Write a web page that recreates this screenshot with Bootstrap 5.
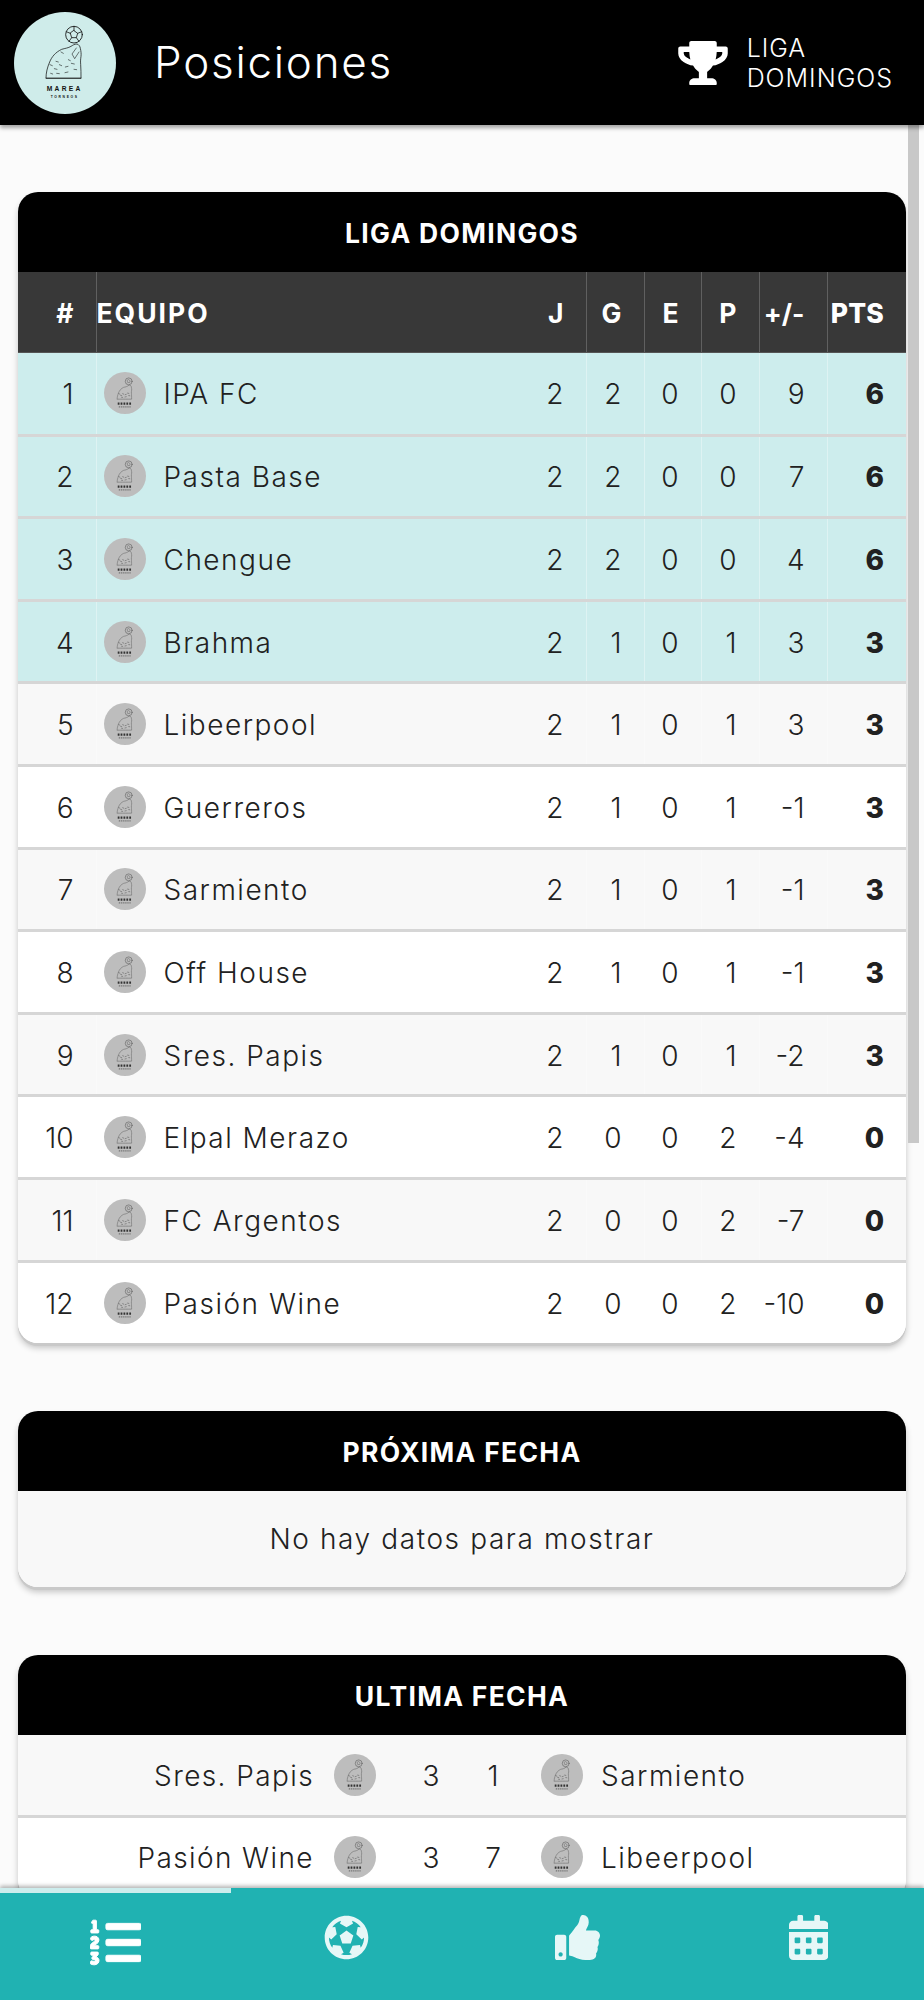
<!DOCTYPE html>
<html lang="es">
<head>
<meta charset="utf-8">
<title>Posiciones</title>
<link rel="stylesheet" href="https://cdn.jsdelivr.net/npm/bootstrap@5.3.0/dist/css/bootstrap.min.css">
<style>
html,body{height:2000px;overflow:hidden;}
body{font-family:Inter,"Open Sans","Liberation Sans",sans-serif;font-weight:300;color:#212121;background:#fbfbfb;}
.shell{height:2000px;}
.topbar{height:125px;background:#000;color:#fff;box-shadow:0 3px 4px rgba(0,0,0,.35);z-index:2;padding-left:14px;}
.crest{width:102px;height:102px;background:#cfecea;color:#111;flex:none;}
.crest svg,.crest-sm svg{width:100%;height:100%;display:block;}
.crest-sm{width:42px;height:42px;background:#bdbdbd;color:#333;flex:none;display:block;}
.page-title{font-size:44px;font-weight:300;margin:-2px 0 0 38px;line-height:1;letter-spacing:1.75px;}
.league{margin-right:31px;}
.league svg{width:50px;height:44px;fill:#fff;margin-right:19px;flex:none;}
.league-name{font-size:25px;line-height:30px;font-weight:300;letter-spacing:1px;}
.content{padding:67px 18px 0;overflow:hidden;background:#fbfbfb;min-height:0;}
.thumb-bar{top:0;left:908px;width:11px;height:1018px;background:#c8c8c8;}
.panel{border-radius:20px;overflow:hidden;margin-bottom:68px;box-shadow:0 3px 0 #c9c9c9,0 5px 6px rgba(0,0,0,.22);background:#fff;}
.panel-head{height:80px;background:#000;color:#fff;font-size:26.5px;font-weight:700;letter-spacing:1.3px;padding-top:3px;}
.pos-table{table-layout:fixed;width:888px;margin:0;font-size:28px;}
.pos-table>:not(caption)>*>*{padding:2px 22px 0 0;text-align:right;vertical-align:middle;border-bottom:3px solid #d6d6d6;border-left:1px solid rgba(255,255,255,.35);height:82.6px;color:#212121;}
.pos-table>thead>*>*{height:80.5px;border-bottom:1px solid #555;border-left:1px solid #606060;font-size:26.5px;font-weight:700;color:#fff;padding-top:3px;}
.pos-table>thead>tr{--bs-table-bg:#383838;}
.pos-table>:not(caption)>*>.cell-first,.pos-table>:not(caption)>*>.cell-j{border-left:0;}
.pos-table>:not(caption)>*>.cell-team{text-align:left;padding:0 0 0 7px;}
.pos-table>thead>*>.cell-team{padding:3px 0 0;letter-spacing:2px;}
.pos-table>:not(caption)>*>.cell-pts{font-weight:800;}
.pos-table>thead>*>.cell-pts{letter-spacing:.2px;}
.pos-table>tbody>tr:last-child>*{border-bottom:0;height:82px;}
.w-a{width:78px}.w-b{width:433px}.w-c{width:57px}.w-d{width:58px}.w-e{width:68px}.w-f{width:79px}
.row-top{--bs-table-bg:#cdeded;}
.row-odd{--bs-table-bg:#f8f8f8;}
.row-even{--bs-table-bg:#fff;}
.team-name{margin-left:18px;white-space:nowrap;letter-spacing:1.5px;padding-top:2px;}
.empty-row{height:96px;background:#f8f8f8;font-size:28px;letter-spacing:1.6px;}
.fx-row{height:82.6px;border-bottom:3px solid #d6d6d6;font-size:28px;background:#f8f8f8;}
.fx-row.alt{background:#fff;}
.fx-home{width:296px;text-align:right;margin-right:20px;white-space:nowrap;letter-spacing:1.4px;padding-top:2px;}
.fx-score{width:62px;text-align:center;padding-top:2px;}
.fx-gap-l{margin-left:24px;}
.fx-gap-r{margin-right:17px;}
.fx-away{margin-left:18px;white-space:nowrap;letter-spacing:1.5px;padding-top:2px;}
.tabbar{height:112px;background:#20b2b2;z-index:3;box-shadow:0 -2px 4px rgba(0,0,0,.3);padding-top:27px;}
.tab-cell{width:231px;text-align:center;height:85px;}
.tab-cell svg{height:45px;width:auto;display:inline-block;vertical-align:top;fill:#e6f7f7;}
.tab-cell.on svg{fill:#fff;height:51px;margin-top:2px;stroke:#fff;stroke-width:10;}
.tab-mark{top:0;left:0;width:231px;height:5px;background:#cdeded;}
</style>
</head>
<body>
<svg width="0" height="0" class="position-absolute">
  <symbol id="crest-mini" viewBox="42 42 306 306">
    <g fill="none" stroke="currentColor" stroke-width="2" stroke-linecap="round" stroke-linejoin="round">
      <circle cx="222" cy="110" r="25" stroke-width="3"/>
      <path d="M222 98l11 8-4 13h-14l-4-13z" stroke-width="2.4"/>
      <path d="M138 240c0-16 4-32 11-48 6-15 17-29 36-38 10-3 20-4 28-9 5-3 10-7 18-7 6 2 9 7 10 13 2 9 3 16 2 24-1 8-2 14-1 24 1 14 1 28 1 41z" stroke-width="2.4" stroke-dasharray="6 5"/>
      <path d="M150 200l7 3M163 212l8 2M178 200l7 3M196 207l8-2M214 196l9 2M170 226l8 1M195 224l9-2M222 214l8 1" stroke-width="3"/>
      <path d="M142 272h102" stroke-width="17" stroke-dasharray="13 8" stroke-linecap="butt"/>
      <path d="M150 296h88" stroke-width="8" stroke-dasharray="8 6" stroke-linecap="butt" opacity=".6"/>
    </g>
  </symbol>
</svg>

<div class="shell d-flex flex-column">
  <header class="topbar d-flex align-items-center position-relative flex-shrink-0">
    <span class="crest rounded-circle d-block">
      <svg viewBox="42 42 306 306">
        <g fill="none" stroke="currentColor" stroke-width="1.7" stroke-linecap="round" stroke-linejoin="round">
          <circle cx="222" cy="110" r="25" stroke-width="2.6"/>
          <path d="M222 98l11 8-4 13h-14l-4-13zM222 98v-13M233 106l12-5M229 119l8 11M215 119l-8 11M211 106l-12-5" stroke-width="2.4"/>
          <path d="M138 240c0-16 4-32 11-48 6-15 17-29 36-38 10-3 20-4 28-9 5-3 10-7 18-7 6 2 9 7 10 13 2 9 3 16 2 24-1 8-2 14-1 24 1 14 1 28 1 41z" stroke-width="2.2"/>
          <path d="M138 240l105 0M183 162l7 4M229 150l-13 18 8 14 13-20M150 200l7 3M163 212l8 2M178 200l7 3M196 207l8-2M214 196l9 2M170 226l8 1M195 224l9-2M222 214l8 1M152 226l6 2M205 185l6 3M168 190l7 2" stroke-width="1.7"/>
        </g>
        <text x="194" y="280" text-anchor="middle" font-family="Liberation Sans" font-weight="700" font-size="20" letter-spacing="7" fill="currentColor">MAREA</text>
        <text x="194" y="301" text-anchor="middle" font-family="Liberation Sans" font-weight="700" font-size="10" letter-spacing="5" fill="currentColor">TORNEOS</text>
      </svg>
    </span>
    <h1 class="page-title">Posiciones</h1>
    <div class="league ms-auto d-flex align-items-center">
      <svg viewBox="0 0 576 512"><path d="M552 64H448V24c0-13.3-10.7-24-24-24H152c-13.3 0-24 10.7-24 24v40H24C10.7 64 0 74.7 0 88v56c0 35.7 22.5 72.4 61.9 100.7 31.5 22.7 69.8 37.1 110 41.7C203.3 338.5 240 360 240 360v72h-48c-35.3 0-64 20.7-64 56v12c0 6.6 5.4 12 12 12h296c6.6 0 12-5.4 12-12v-12c0-35.3-28.7-56-64-56h-48v-72s36.7-21.5 68.1-73.6c40.3-4.6 78.7-19 110-41.7 39.3-28.3 61.9-65 61.9-100.7V88c0-13.3-10.7-24-24-24zM99.3 192.8C74.9 175.2 64 155.6 64 144v-16h64.2c1 32.6 5.8 61.2 12.8 86.2-15.1-5.2-29.2-12.4-41.7-21.4zM512 144c0 16.1-17.7 36.1-35.3 48.8-12.5 9-26.7 16.2-41.8 21.4 7-25 11.8-53.6 12.8-86.2H512v16z"/></svg>
      <div class="league-name">LIGA<br>DOMINGOS</div>
    </div>
  </header>

  <main class="content flex-grow-1 position-relative">
    <div class="thumb-bar position-absolute"></div>

    <section class="panel">
      <div class="panel-head d-flex align-items-center justify-content-center">LIGA DOMINGOS</div>
      <table class="table pos-table">
        <colgroup><col class="w-a"><col class="w-b"><col class="w-c"><col class="w-d"><col class="w-c"><col class="w-d"><col class="w-e"><col class="w-f"></colgroup>
        <thead><tr><th class="cell-first">#</th><th class="cell-team">EQUIPO</th><th class="cell-j">J</th><th>G</th><th>E</th><th>P</th><th>+/-</th><th class="cell-pts">PTS</th></tr></thead>
        <tbody id="rows">
          <tr class="row-top"><td class="cell-first">1</td><td class="cell-team"><div class="d-flex align-items-center"><span class="crest-sm rounded-circle"><svg><use href="#crest-mini"/></svg></span><span class="team-name">IPA FC</span></div></td><td class="cell-j">2</td><td>2</td><td>0</td><td>0</td><td>9</td><td class="cell-pts">6</td></tr>
          <tr class="row-top"><td class="cell-first">2</td><td class="cell-team"><div class="d-flex align-items-center"><span class="crest-sm rounded-circle"><svg><use href="#crest-mini"/></svg></span><span class="team-name">Pasta Base</span></div></td><td class="cell-j">2</td><td>2</td><td>0</td><td>0</td><td>7</td><td class="cell-pts">6</td></tr>
          <tr class="row-top"><td class="cell-first">3</td><td class="cell-team"><div class="d-flex align-items-center"><span class="crest-sm rounded-circle"><svg><use href="#crest-mini"/></svg></span><span class="team-name">Chengue</span></div></td><td class="cell-j">2</td><td>2</td><td>0</td><td>0</td><td>4</td><td class="cell-pts">6</td></tr>
          <tr class="row-top"><td class="cell-first">4</td><td class="cell-team"><div class="d-flex align-items-center"><span class="crest-sm rounded-circle"><svg><use href="#crest-mini"/></svg></span><span class="team-name">Brahma</span></div></td><td class="cell-j">2</td><td>1</td><td>0</td><td>1</td><td>3</td><td class="cell-pts">3</td></tr>
          <tr class="row-odd"><td class="cell-first">5</td><td class="cell-team"><div class="d-flex align-items-center"><span class="crest-sm rounded-circle"><svg><use href="#crest-mini"/></svg></span><span class="team-name">Libeerpool</span></div></td><td class="cell-j">2</td><td>1</td><td>0</td><td>1</td><td>3</td><td class="cell-pts">3</td></tr>
          <tr class="row-even"><td class="cell-first">6</td><td class="cell-team"><div class="d-flex align-items-center"><span class="crest-sm rounded-circle"><svg><use href="#crest-mini"/></svg></span><span class="team-name">Guerreros</span></div></td><td class="cell-j">2</td><td>1</td><td>0</td><td>1</td><td>-1</td><td class="cell-pts">3</td></tr>
          <tr class="row-odd"><td class="cell-first">7</td><td class="cell-team"><div class="d-flex align-items-center"><span class="crest-sm rounded-circle"><svg><use href="#crest-mini"/></svg></span><span class="team-name">Sarmiento</span></div></td><td class="cell-j">2</td><td>1</td><td>0</td><td>1</td><td>-1</td><td class="cell-pts">3</td></tr>
          <tr class="row-even"><td class="cell-first">8</td><td class="cell-team"><div class="d-flex align-items-center"><span class="crest-sm rounded-circle"><svg><use href="#crest-mini"/></svg></span><span class="team-name">Off House</span></div></td><td class="cell-j">2</td><td>1</td><td>0</td><td>1</td><td>-1</td><td class="cell-pts">3</td></tr>
          <tr class="row-odd"><td class="cell-first">9</td><td class="cell-team"><div class="d-flex align-items-center"><span class="crest-sm rounded-circle"><svg><use href="#crest-mini"/></svg></span><span class="team-name">Sres. Papis</span></div></td><td class="cell-j">2</td><td>1</td><td>0</td><td>1</td><td>-2</td><td class="cell-pts">3</td></tr>
          <tr class="row-even"><td class="cell-first">10</td><td class="cell-team"><div class="d-flex align-items-center"><span class="crest-sm rounded-circle"><svg><use href="#crest-mini"/></svg></span><span class="team-name">Elpal Merazo</span></div></td><td class="cell-j">2</td><td>0</td><td>0</td><td>2</td><td>-4</td><td class="cell-pts">0</td></tr>
          <tr class="row-odd"><td class="cell-first">11</td><td class="cell-team"><div class="d-flex align-items-center"><span class="crest-sm rounded-circle"><svg><use href="#crest-mini"/></svg></span><span class="team-name">FC Argentos</span></div></td><td class="cell-j">2</td><td>0</td><td>0</td><td>2</td><td>-7</td><td class="cell-pts">0</td></tr>
          <tr class="row-even"><td class="cell-first">12</td><td class="cell-team"><div class="d-flex align-items-center"><span class="crest-sm rounded-circle"><svg><use href="#crest-mini"/></svg></span><span class="team-name">Pasión Wine</span></div></td><td class="cell-j">2</td><td>0</td><td>0</td><td>2</td><td>-10</td><td class="cell-pts">0</td></tr>
        </tbody>
      </table>
    </section>

    <section class="panel">
      <div class="panel-head d-flex align-items-center justify-content-center">PRÓXIMA FECHA</div>
      <div class="empty-row d-flex align-items-center justify-content-center">No hay datos para mostrar</div>
    </section>

    <section class="panel">
      <div class="panel-head d-flex align-items-center justify-content-center">ULTIMA FECHA</div>
      <div class="fx-row d-flex align-items-center">
        <span class="fx-home">Sres. Papis</span><span class="crest-sm rounded-circle"><svg><use href="#crest-mini"/></svg></span>
        <span class="fx-score fx-gap-l">3</span><span class="fx-score fx-gap-r">1</span>
        <span class="crest-sm rounded-circle"><svg><use href="#crest-mini"/></svg></span><span class="fx-away">Sarmiento</span>
      </div>
      <div class="fx-row alt d-flex align-items-center">
        <span class="fx-home">Pasión Wine</span><span class="crest-sm rounded-circle"><svg><use href="#crest-mini"/></svg></span>
        <span class="fx-score fx-gap-l">3</span><span class="fx-score fx-gap-r">7</span>
        <span class="crest-sm rounded-circle"><svg><use href="#crest-mini"/></svg></span><span class="fx-away">Libeerpool</span>
      </div>
    </section>
  </main>

  <nav class="tabbar d-flex position-relative flex-shrink-0">
    <span class="tab-mark position-absolute"></span>
    <div class="tab-cell on"><svg viewBox="0 0 512 512"><path d="M61.77 401l17.5-20.15a19.92 19.92 0 0 0 5.07-14.19v-3.31C84.34 356 80.5 352 73 352H16a8 8 0 0 0-8 8v16a8 8 0 0 0 8 8h22.83a157.41 157.41 0 0 0-11 12.31l-5.61 7c-4 5.07-5.25 10.13-2.8 14.88l1.05 1.93c3 5.76 6.29 7.88 12.25 7.88h4.73c10.33 0 15.94 2.44 15.94 9.09 0 4.72-4.2 8.22-14.36 8.22a41.54 41.54 0 0 1-15.47-3.12c-6.49-3.88-11.74-3.5-15.6 3.12l-5.59 9.31c-3.72 6.13-3.19 11.72 2.63 15.94 7.71 4.69 20.38 9.44 37 9.44 34.16 0 48.5-22.75 48.5-44.12-.03-14.38-9.12-29.76-28.73-34.88zM496 224H176a16 16 0 0 0-16 16v32a16 16 0 0 0 16 16h320a16 16 0 0 0 16-16v-32a16 16 0 0 0-16-16zm0-160H176a16 16 0 0 0-16 16v32a16 16 0 0 0 16 16h320a16 16 0 0 0 16-16V80a16 16 0 0 0-16-16zm0 320H176a16 16 0 0 0-16 16v32a16 16 0 0 0 16 16h320a16 16 0 0 0 16-16v-32a16 16 0 0 0-16-16zM16 160h64a8 8 0 0 0 8-8v-16a8 8 0 0 0-8-8H64V40a8 8 0 0 0-8-8H32a8 8 0 0 0-7.14 4.42l-8 16A8 8 0 0 0 24 64h8v64H16a8 8 0 0 0-8 8v16a8 8 0 0 0 8 8zm-3.91 160H80a8 8 0 0 0 8-8v-16a8 8 0 0 0-8-8H41.32c3.29-10.29 48.34-18.68 48.34-56.44 0-29.06-25-39.56-44.47-39.56-21.36 0-33.8 10-40.46 18.75-4.37 5.59-3 10.84 2.8 15.37l8.58 6.88c5.61 4.56 11 2.47 16.12-2.44a13.44 13.44 0 0 1 9.46-3.84c3.33 0 9.28 1.56 9.28 8.75C51 248.19 0 257.31 0 304.59v4C0 316 5.08 320 12.09 320z"/></svg></div>
    <div class="tab-cell"><svg viewBox="0 0 512 512"><path d="M504 256c0 136.967-111.033 248-248 248S8 392.967 8 256 119.033 8 256 8s248 111.033 248 248zm-48 0l-.003-.282-26.064 22.741-62.679-58.5 16.454-84.355 34.303 3.072c-24.889-34.216-60.004-60.089-100.709-73.141l13.651 31.939L256 139l-74.953-41.525 13.651-31.939c-40.631 13.028-75.78 38.87-100.709 73.141l34.565-3.073 16.192 84.355-62.679 58.5-26.064-22.741-.003.282c0 43.015 13.497 83.952 38.472 117.991l7.704-33.897 85.138 10.447 36.301 77.826-29.902 17.786c40.202 13.122 84.29 13.148 124.572 0l-29.902-17.786 36.301-77.826 85.138-10.447 7.704 33.897C442.503 339.952 456 299.015 456 256zm-248.102 69.571l-29.894-91.312L256 177.732l77.996 56.527-29.622 91.312h-96.476z"/></svg></div>
    <div class="tab-cell"><svg viewBox="0 0 512 512"><path d="M104 224H24c-13.255 0-24 10.745-24 24v240c0 13.255 10.745 24 24 24h80c13.255 0 24-10.745 24-24V248c0-13.255-10.745-24-24-24zM64 472c-13.255 0-24-10.745-24-24s10.745-24 24-24 24 10.745 24 24-10.745 24-24 24zM384 81.452c0 42.416-25.97 66.208-33.277 94.548h101.723c33.397 0 59.397 27.746 59.553 58.098.084 17.938-7.546 37.249-19.439 49.197l-.11.11c9.836 23.337 8.237 56.037-9.308 79.469 8.681 25.895-.069 57.704-16.382 74.757 4.298 17.598 2.244 32.575-6.148 44.632C440.202 511.587 389.616 512 346.839 512l-2.845-.001c-48.287-.017-87.806-17.598-119.56-31.725-15.957-7.099-36.821-15.887-52.651-16.178-6.54-.12-11.783-5.457-11.783-11.998v-213.77c0-3.2 1.282-6.271 3.558-8.521 39.614-39.144 56.648-80.587 89.117-113.111 14.804-14.832 20.188-37.236 25.393-58.902C282.515 39.293 291.817 0 312 0c24 0 72 8 72 81.452z"/></svg></div>
    <div class="tab-cell"><svg viewBox="0 0 448 512"><path d="M0 464c0 26.5 21.5 48 48 48h352c26.5 0 48-21.5 48-48V192H0v272zm320-196c0-6.6 5.4-12 12-12h40c6.6 0 12 5.4 12 12v40c0 6.6-5.4 12-12 12h-40c-6.6 0-12-5.4-12-12v-40zm0 128c0-6.6 5.4-12 12-12h40c6.6 0 12 5.4 12 12v40c0 6.6-5.4 12-12 12h-40c-6.6 0-12-5.4-12-12v-40zM192 268c0-6.6 5.4-12 12-12h40c6.6 0 12 5.4 12 12v40c0 6.6-5.4 12-12 12h-40c-6.6 0-12-5.4-12-12v-40zm0 128c0-6.6 5.4-12 12-12h40c6.6 0 12 5.4 12 12v40c0 6.6-5.4 12-12 12h-40c-6.6 0-12-5.4-12-12v-40zM64 268c0-6.6 5.4-12 12-12h40c6.6 0 12 5.4 12 12v40c0 6.6-5.4 12-12 12H76c-6.6 0-12-5.4-12-12v-40zm0 128c0-6.6 5.4-12 12-12h40c6.6 0 12 5.4 12 12v40c0 6.6-5.4 12-12 12H76c-6.6 0-12-5.4-12-12v-40zM400 64h-48V16c0-8.8-7.2-16-16-16h-32c-8.8 0-16 7.2-16 16v48H160V16c0-8.8-7.2-16-16-16h-32c-8.8 0-16 7.2-16 16v48H48C21.5 64 0 85.5 0 112v48h448v-48c0-26.5-21.5-48-48-48z"/></svg></div>
  </nav>
</div>
<script src="https://cdn.jsdelivr.net/npm/bootstrap@5.3.0/dist/js/bootstrap.bundle.min.js"></script>
</body>
</html>
